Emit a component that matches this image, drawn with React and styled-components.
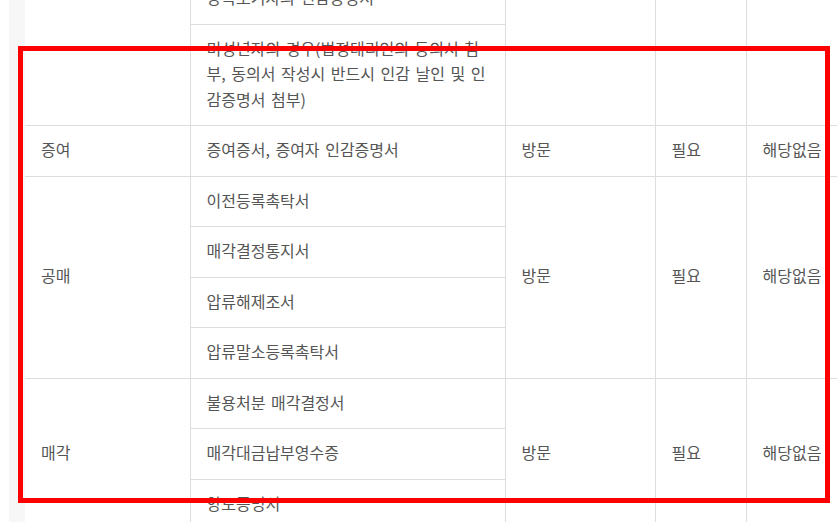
import React from 'react';
import styled, { createGlobalStyle } from 'styled-components';

const GlobalStyle = createGlobalStyle`
  html, body {
    margin: 0;
    padding: 0;
    background: #ffffff;
  }
  body {
    font-family: "Noto Sans CJK KR", "Noto Sans", sans-serif;
    overflow: hidden;
  }
`;

const Page = styled.div`
  position: relative;
  display: flex;
  width: 837px;
  height: 522px;
  overflow: hidden;
  padding-left: 9px;
  box-sizing: border-box;
`;

const Gutter = styled.div`
  flex: 0 0 16px;
  background: #f7f7f7;
`;

const Content = styled.div`
  flex: 1;
  overflow: hidden;
`;

const Table = styled.table`
  border-collapse: collapse;
  table-layout: fixed;
  width: 900px;
  margin-top: -27px;
  color: #555555;
  font-size: 16px;
  line-height: 25.5px;
  word-spacing: 2px;
`;

const Cell = styled.td`
  border: 1px solid #dddddd;
  border-left: ${p => (p.$first ? 'none' : '1px solid #dddddd')};
  padding: 11px 16px 13px;
  vertical-align: middle;
  text-align: left;
  word-break: normal;
`;

const HighlightBox = styled.div`
  position: absolute;
  left: 18px;
  top: 46px;
  width: 812px;
  height: 457px;
  border: 5px solid #ff0000;
  box-sizing: border-box;
  pointer-events: none;
`;

const groups = [
  {
    type: '',
    docs: ['상속포기자의 인감증명서', '미성년자의 경우(법정대리인의 동의서 첨부, 동의서 작성시 반드시 인감 날인 및 인감증명서 첨부)'],
    method: '',
    need: '',
    extra: '',
  },
  {
    type: '증여',
    docs: ['증여증서, 증여자 인감증명서'],
    method: '방문',
    need: '필요',
    extra: '해당없음',
  },
  {
    type: '공매',
    docs: ['이전등록촉탁서', '매각결정통지서', '압류해제조서', '압류말소등록촉탁서'],
    method: '방문',
    need: '필요',
    extra: '해당없음',
  },
  {
    type: '매각',
    docs: ['불용처분 매각결정서', '매각대금납부영수증', '양도증명서'],
    method: '방문',
    need: '필요',
    extra: '해당없음',
  },
];

export default function App() {
  return (
    <>
      <GlobalStyle />
      <Page>
        <Gutter />
        <Content>
          <Table>
            <colgroup>
              <col style={{ width: 165 }} />
              <col style={{ width: 315 }} />
              <col style={{ width: 150 }} />
              <col style={{ width: 91 }} />
              <col style={{ width: 179 }} />
            </colgroup>
            <tbody>
              {groups.map((g, gi) =>
                g.docs.map((doc, di) => (
                  <tr key={`${gi}-${di}`}>
                    {di === 0 && <Cell $first rowSpan={g.docs.length}>{g.type}</Cell>}
                    <Cell>{doc}</Cell>
                    {di === 0 && <Cell rowSpan={g.docs.length}>{g.method}</Cell>}
                    {di === 0 && <Cell rowSpan={g.docs.length}>{g.need}</Cell>}
                    {di === 0 && <Cell rowSpan={g.docs.length}>{g.extra}</Cell>}
                  </tr>
                ))
              )}
            </tbody>
          </Table>
        </Content>
        <HighlightBox />
      </Page>
    </>
  );
}
